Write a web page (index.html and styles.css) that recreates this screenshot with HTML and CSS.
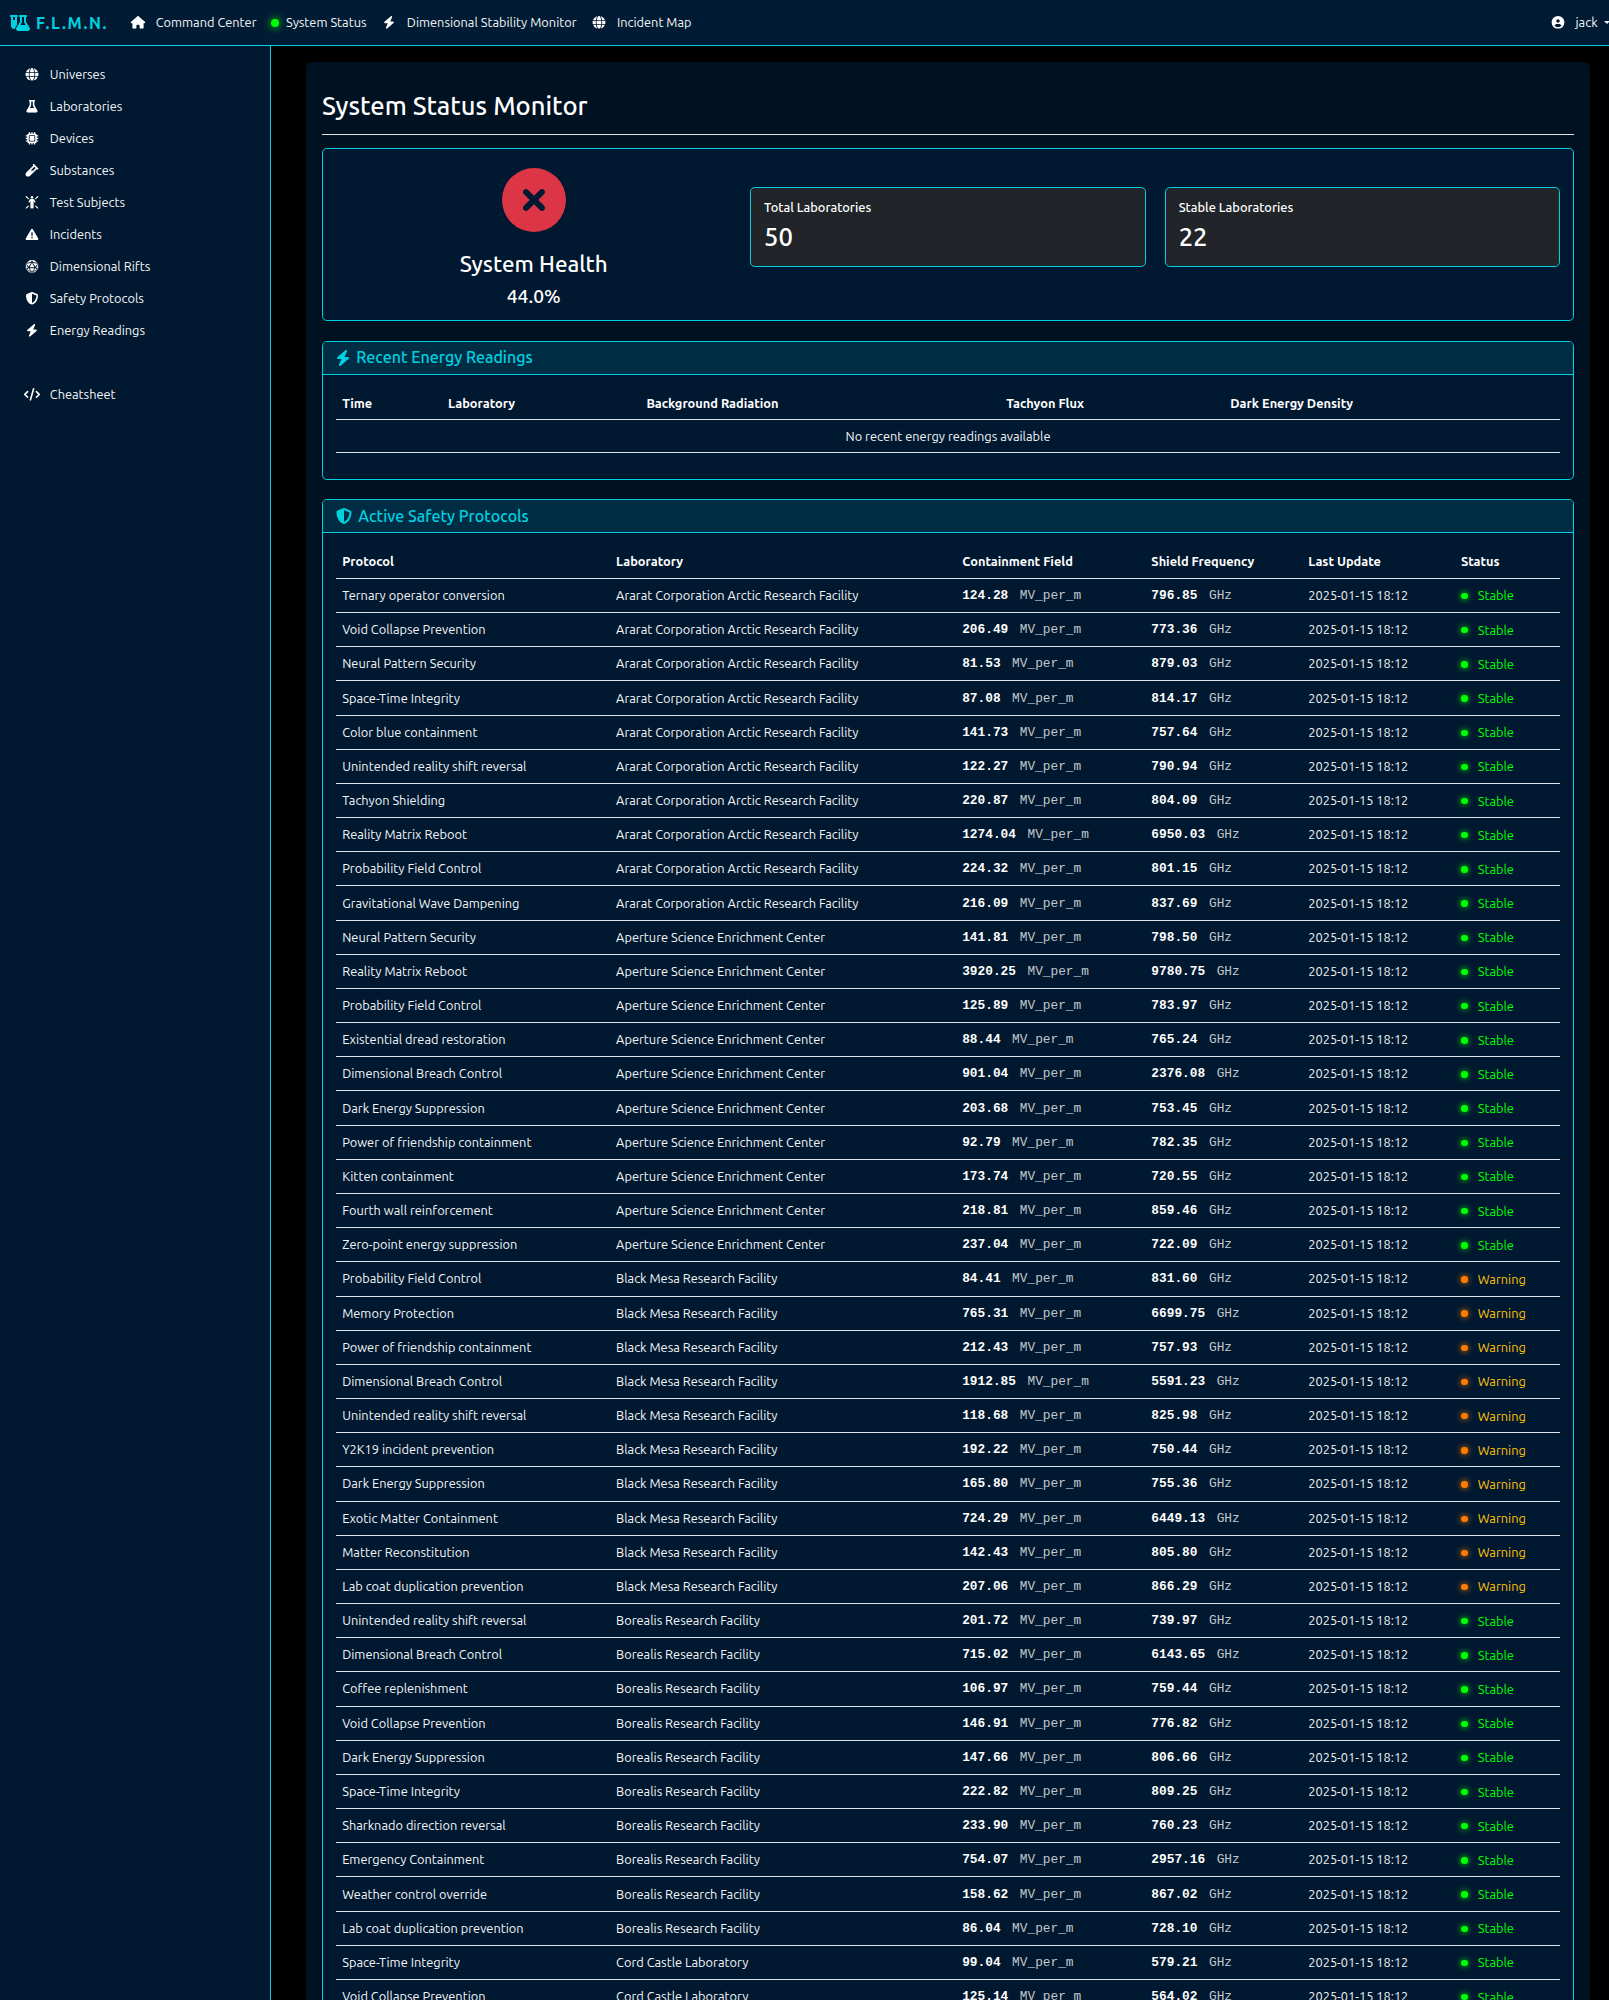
FILE: index.html
```
<!DOCTYPE html>
<html lang="en">
<head>
<meta charset="utf-8">
<title>System Status Monitor</title>
<link rel="stylesheet" href="styles.css">
</head>
<body>
<svg class="sprite" aria-hidden="true">
  <symbol id="bolt" viewBox="0 0 448 512"><path d="M349.4 44.6c5.9-13.7 1.5-29.7-10.6-38.5s-28.6-8-39.9 1.8l-256 224c-10 8.8-13.6 22.9-8.9 35.3S50.7 288 64 288H175.5L98.6 467.4c-5.9 13.7-1.5 29.7 10.6 38.5s28.6 8 39.9-1.8l256-224c10-8.8 13.6-22.9 8.9-35.3s-16.6-20.7-30-20.7H272.5L349.4 44.6z"/></symbol>
  <symbol id="house" viewBox="0 0 576 512"><path d="M575.8 255.5c0 18-15 32.1-32 32.1h-32l.7 160.2c0 2.7-.2 5.4-.5 8.1V472c0 22.1-17.9 40-40 40H456c-1.1 0-2.2 0-3.3-.1c-1.4 .1-2.8 .1-4.2 .1H416 392c-22.1 0-40-17.9-40-40V448 384c0-17.7-14.3-32-32-32H256c-17.7 0-32 14.3-32 32v64 24c0 22.1-17.9 40-40 40H160 128.1c-1.5 0-3-.1-4.5-.2c-1.2 .1-2.4 .2-3.6 .2H104c-22.1 0-40-17.9-40-40V360c0-.9 0-1.9 .1-2.8V287.6H32c-18 0-32-14-32-32.1c0-9 3-17 10-24L266.4 8c7-7 15-8 22-8s15 2 21 7L564.8 231.5c8 7 12 15 11 24z"/></symbol>
  <symbol id="globe" viewBox="0 0 512 512"><path d="M352 256c0 22.2-1.2 43.6-3.3 64H163.3c-2.2-20.4-3.3-41.8-3.3-64s1.2-43.6 3.3-64H348.7c2.2 20.4 3.3 41.8 3.3 64zm28.8-64H503.9c5.3 20.5 8.1 41.9 8.1 64s-2.8 43.5-8.1 64H380.8c2.1-20.6 3.2-42 3.2-64s-1.1-43.4-3.2-64zm112.6-32H376.7c-10-63.9-29.8-117.4-55.3-151.6c78.3 20.7 142 77.5 171.9 151.6zm-149.1 0H167.7c6.1-36.4 15.5-68.6 27-94.7c10.5-23.6 22.2-40.7 33.5-51.5C239.4 3.2 248.7 0 256 0s16.6 3.2 27.8 13.8c11.3 10.8 23 27.9 33.5 51.5c11.6 26 20.9 58.2 27 94.7zm-209 0H18.6C48.6 85.9 112.2 29.1 190.6 8.4C165.1 42.6 145.3 96.1 135.3 160zM8.1 192H131.2c-2.1 20.6-3.2 42-3.2 64s1.1 43.4 3.2 64H8.1C2.8 299.5 0 278.1 0 256s2.8-43.5 8.1-64zM194.7 446.6c-11.6-26-20.9-58.2-27-94.6H344.3c-6.1 36.4-15.5 68.6-27 94.6c-10.5 23.6-22.2 40.7-33.5 51.5C272.6 508.8 263.3 512 256 512s-16.6-3.2-27.8-13.8c-11.3-10.8-23-27.9-33.5-51.5zM135.3 352c10 63.9 29.8 117.4 55.3 151.6C112.2 482.9 48.6 426.1 18.6 352H135.3zm358.1 0c-30 74.1-93.6 130.9-171.9 151.6c25.5-34.2 45.2-87.7 55.3-151.6H493.4z"/></symbol>
  <symbol id="flask" viewBox="0 0 448 512"><path d="M288 0H128C110.3 0 96 14.3 96 32s14.3 32 32 32V196.8c0 11.8-3.3 23.5-9.5 33.5L10.3 406.2C3.6 417.2 0 429.7 0 442.6C0 480.9 31.1 512 69.4 512H378.6c38.3 0 69.4-31.1 69.4-69.4c0-12.8-3.6-25.4-10.3-36.4L329.5 230.4c-6.2-10.1-9.5-21.7-9.5-33.5V64c17.7 0 32-14.3 32-32s-14.3-32-32-32H288zM192 196.8V64h64V196.8c0 23.7 6.6 46.9 19 67.1L309.5 320h-171L173 263.9c12.4-20.2 19-43.4 19-67.1z"/></symbol>
  <symbol id="chip" viewBox="0 0 512 512"><path d="M176 24c0-13.3-10.7-24-24-24s-24 10.7-24 24V64c-35.3 0-64 28.7-64 64H24c-13.3 0-24 10.7-24 24s10.7 24 24 24H64v56H24c-13.3 0-24 10.7-24 24s10.7 24 24 24H64v56H24c-13.3 0-24 10.7-24 24s10.7 24 24 24H64c0 35.3 28.7 64 64 64v40c0 13.3 10.7 24 24 24s24-10.7 24-24V448h56v40c0 13.3 10.7 24 24 24s24-10.7 24-24V448h56v40c0 13.3 10.7 24 24 24s24-10.7 24-24V448c35.3 0 64-28.7 64-64h40c13.3 0 24-10.7 24-24s-10.7-24-24-24H448V280h40c13.3 0 24-10.7 24-24s-10.7-24-24-24H448V176h40c13.3 0 24-10.7 24-24s-10.7-24-24-24H448c0-35.3-28.7-64-64-64V24c0-13.3-10.7-24-24-24s-24 10.7-24 24V64H280V24c0-13.3-10.7-24-24-24s-24 10.7-24 24V64H176V24zM160 128H352c17.7 0 32 14.3 32 32V352c0 17.7-14.3 32-32 32H160c-17.7 0-32-14.3-32-32V160c0-17.7 14.3-32 32-32zm192 32H160V352H352V160z"/></symbol>
  <symbol id="vial" viewBox="0 0 512 512"><path d="M342.6 9.4c-12.5-12.5-32.8-12.5-45.3 0s-12.5 32.8 0 45.3l9.4 9.4L28.1 342.6C10.1 360.6 0 385 0 410.5V416c0 53 43 96 96 96h5.5c25.5 0 49.9-10.1 67.9-28.1L448 205.3l9.4 9.4c12.5 12.5 32.8 12.5 45.3 0s12.5-32.8 0-45.3l-32-32-96-96-32-32zM205.3 256L352 109.3 402.7 160l-96 96H205.3z"/></symbol>
  <symbol id="rays" viewBox="0 0 512 512"><circle cx="256" cy="48" r="48"/><path d="M220 112h72c24 0 42 10 54 32l46 84c7 13 3 28-10 35s-28 3-35-10l-27-48V480c0 18-14 32-32 32s-30-14-30-32V352h-4v128c0 18-12 32-30 32s-32-14-32-32V205l-27 48c-7 13-22 17-35 10s-17-22-10-35l46-84c12-22 30-32 54-32z"/><path d="M24 24l84 84M488 24l-84 84M24 488l84-84M488 488l-84-84" fill="none" stroke="currentColor" stroke-width="48" stroke-linecap="round"/></symbol>
  <symbol id="alert" viewBox="0 0 512 512"><path d="M256 32c14.2 0 27.3 7.5 34.5 19.8l216 368c7.3 12.4 7.3 27.7 .2 40.1S486.3 480 472 480H40c-14.3 0-27.6-7.7-34.7-20.1s-7-27.8 .2-40.1l216-368C228.7 39.5 241.8 32 256 32zm0 128c-13.3 0-24 10.7-24 24V296c0 13.3 10.7 24 24 24s24-10.7 24-24V184c0-13.3-10.7-24-24-24zm32 224a32 32 0 1 0 -64 0 32 32 0 1 0 64 0z"/></symbol>
  <symbol id="sphere" viewBox="0 0 512 512"><path d="M256 112L352 288H160zM228 98L122 270 42 160zM284 98L390 270 470 160zM26 200L100 300 26 330zM486 200L412 300 486 330zM150 328H362L256 470zM60 368L118 332 206 464zM452 368L394 332 306 464zM130 26L230 8V68L84 112zM382 26L282 8V68L428 112zM90 424L206 500 140 488zM422 424L306 500 372 488z"/><circle cx="256" cy="256" r="240" fill="none" stroke="currentColor" stroke-width="26"/></symbol>
  <symbol id="shield" viewBox="0 0 512 512"><path d="M256 0c4.6 0 9.2 1 13.4 2.9L457.7 82.8c22 9.3 38.4 31 38.3 57.2c-.5 99.2-41.3 280.7-213.6 363.2c-16.7 8-36.1 8-52.8 0C57.3 420.7 16.5 239.2 16 140c-.1-26.2 16.3-47.9 38.3-57.2L242.7 2.9C246.8 1 251.4 0 256 0zm0 66.8V444.8C394 378 431.1 230.1 432 141.4L256 66.8z"/></symbol>
  <symbol id="code" viewBox="0 0 640 512"><path d="M392.8 1.2c-17-4.9-34.7 5-39.6 22l-128 448c-4.9 17 5 34.7 22 39.6s34.7-5 39.6-22l128-448c4.9-17-5-34.7-22-39.6zm80.6 120.1c-12.5 12.5-12.5 32.8 0 45.3L562.7 256l-89.4 89.4c-12.5 12.5-12.5 32.8 0 45.3s32.8 12.5 45.3 0l112-112c12.5-12.5 12.5-32.8 0-45.3l-112-112c-12.5-12.5-32.8-12.5-45.3 0zm-306.7 0c-12.5-12.5-32.8-12.5-45.3 0l-112 112c-12.5 12.5-12.5 32.8 0 45.3l112 112c12.5 12.5 32.8 12.5 45.3 0s12.5-32.8 0-45.3L77.3 256l89.4-89.4c12.5-12.5 12.5-32.8 0-45.3z"/></symbol>
  <symbol id="user" viewBox="0 0 512 512"><path d="M399 384.2C376.9 345.8 335.4 320 288 320H224c-47.4 0-88.9 25.8-111 64.2c35.2 39.2 86.2 63.8 143 63.8s107.8-24.7 143-63.8zM0 256a256 256 0 1 1 512 0A256 256 0 1 1 0 256zm256 16a72 72 0 1 0 0-144 72 72 0 1 0 0 144z"/></symbol>
  <symbol id="xmark" viewBox="0 0 512 512"><path d="M256 512A256 256 0 1 0 256 0a256 256 0 1 0 0 512zM175 175c9.4-9.4 24.6-9.4 33.9 0l47 47 47-47c9.4-9.4 24.6-9.4 33.9 0s9.4 24.6 0 33.9l-47 47 47 47c9.4 9.4 9.4 24.6 0 33.9s-24.6 9.4-33.9 0l-47-47-47 47c-9.4 9.4-24.6 9.4-33.9 0s-9.4-24.6 0-33.9l47-47-47-47c-9.4-9.4-9.4-24.6 0-33.9z"/></symbol>
  <symbol id="logo" viewBox="0 0 640 512"><path d="M175 389.4c-9.8 16-15 34.3-15 53.1c-10 3.5-20.8 5.5-32 5.5c-53 0-96-43-96-96V64C14.3 64 0 49.7 0 32S14.3 0 32 0H96h64 64c17.7 0 32 14.3 32 32s-14.3 32-32 32V309.9l-49 79.6zM96 64v96h64V64H96zM352 0H480h32c17.7 0 32 14.3 32 32s-14.3 32-32 32V214.9L629.7 406.2c6.7 10.9 10.3 23.5 10.3 36.4c0 38.3-31.1 69.4-69.4 69.4H261.4c-38.3 0-69.4-31.1-69.4-69.4c0-12.8 3.6-25.4 10.3-36.4L320 214.9V64c-17.7 0-32-14.3-32-32s14.3-32 32-32h32zm32 64V224c0 5.9-1.6 11.7-4.7 16.8L330.5 320h171l-48.8-79.2c-3.1-5-4.7-10.8-4.7-16.8V64H384z"/></symbol>
</svg>

<header class="navbar">
  <a class="brand"><svg class="brand-icon"><use href="#logo"/></svg>F.L.M.N.</a>
  <nav class="nav-links">
    <a class="link"><svg class="icon"><use href="#house"/></svg>Command Center</a>
    <a class="link link-status"><i class="nav-dot"></i>System Status</a>
    <a class="link"><svg class="icon"><use href="#bolt"/></svg>Dimensional Stability Monitor</a>
    <a class="link"><svg class="icon"><use href="#globe"/></svg>Incident Map</a>
  </nav>
  <a class="link user"><svg class="icon"><use href="#user"/></svg>jack<i class="caret"></i></a>
</header>

<div class="shell">
  <aside class="sidebar">
    <a class="link"><svg class="icon"><use href="#globe"/></svg>Universes</a>
    <a class="link"><svg class="icon"><use href="#flask"/></svg>Laboratories</a>
    <a class="link"><svg class="icon"><use href="#chip"/></svg>Devices</a>
    <a class="link"><svg class="icon"><use href="#vial"/></svg>Substances</a>
    <a class="link"><svg class="icon"><use href="#rays"/></svg>Test Subjects</a>
    <a class="link"><svg class="icon"><use href="#alert"/></svg>Incidents</a>
    <a class="link"><svg class="icon"><use href="#sphere"/></svg>Dimensional Rifts</a>
    <a class="link"><svg class="icon"><use href="#shield"/></svg>Safety Protocols</a>
    <a class="link"><svg class="icon"><use href="#bolt"/></svg>Energy Readings</a>
    <a class="link link-extra"><svg class="icon"><use href="#code"/></svg>Cheatsheet</a>
  </aside>

  <main class="panel">
    <h2 class="page-title">System Status Monitor</h2>

    <section class="card overview">
      <div class="health">
        <svg class="health-icon"><use href="#xmark"/></svg>
        <h3 class="health-title">System Health</h3>
        <div class="health-value">44.0%</div>
      </div>
      <div class="stats">
        <div class="stat"><h6 class="stat-label">Total Laboratories</h6><div class="stat-value">50</div></div>
        <div class="stat"><h6 class="stat-label">Stable Laboratories</h6><div class="stat-value">22</div></div>
      </div>
    </section>

    <section class="card">
      <h5 class="card-header"><svg class="card-icon narrow"><use href="#bolt"/></svg>Recent Energy Readings</h5>
      <div class="card-body">
        <table class="table">
          <colgroup><col class="r1"><col class="r2"><col class="r3"><col class="r4"><col></colgroup>
          <thead><tr><th>Time</th><th>Laboratory</th><th>Background Radiation</th><th>Tachyon Flux</th><th>Dark Energy Density</th></tr></thead>
          <tbody><tr><td colspan="5" class="empty">No recent energy readings available</td></tr></tbody>
        </table>
      </div>
    </section>

    <section class="card">
      <h5 class="card-header"><svg class="card-icon"><use href="#shield"/></svg>Active Safety Protocols</h5>
      <div class="card-body">
        <table class="table protocols">
          <colgroup><col class="p1"><col class="p2"><col class="p3"><col class="p4"><col class="p5"><col></colgroup>
          <thead><tr><th>Protocol</th><th>Laboratory</th><th>Containment Field</th><th>Shield Frequency</th><th>Last Update</th><th>Status</th></tr></thead>
          <tbody id="protocol-rows"></tbody>
        </table>
      </div>
    </section>
  </main>
</div>
<script src="app.js"></script>
</body>
</html>
```
FILE: styles.css
```
:root {
  --cyan: #00d1e0;
  --navy: #001830;
  --line: #dee2e6;
  font-size: 12.8px;
}
* { box-sizing: border-box; }
body {
  margin: 0;
  height: 2000px;
  overflow: hidden;
  display: flex;
  flex-direction: column;
  background: #000;
  color: #f4f6f8;
  font: 12.8px/1.5 Ubuntu, "Noto Sans", sans-serif;
}
h2, h3, h5, h6 { margin: 0; font-weight: 500; line-height: 1.2; color: #fff; }
svg { fill: currentColor; flex: none; }
.sprite { position: absolute; width: 0; height: 0; }

.navbar {
  flex: none;
  display: flex;
  align-items: center;
  height: 46px;
  padding-left: 9.5px;
  background: #001b33;
  border-bottom: 1px solid var(--cyan);
}
.brand {
  display: flex;
  align-items: center;
  gap: 6.4px;
  width: 120.8px;
  color: var(--cyan);
  font-size: 16px;
  font-weight: 700;
  letter-spacing: 1.6px;
}
.brand-icon { width: 20px; height: 16px; }
.nav-links { display: flex; gap: 14.9px; }
.link { display: flex; align-items: center; gap: 9.4px; white-space: nowrap; }
.icon { width: 16px; height: 12.8px; color: #fff; }
.link-status { gap: 6.7px; }
.nav-dot {
  width: 8px;
  height: 8px;
  border-radius: 50%;
  background: #0f0;
  box-shadow: 0 0 8px #0f0;
}
.user { margin-left: auto; margin-right: -1px; }
.caret {
  margin-left: -3px;
  border: 3.84px solid transparent;
  border-top-color: #f4f6f8;
  border-bottom: 0;
}

.shell { flex: 1; display: flex; min-height: 0; }
.sidebar {
  flex: none;
  width: 271px;
  padding: 12.4px 0 0 24.4px;
  background: var(--navy);
  border-right: 1px solid var(--cyan);
}
.sidebar .link { height: 32px; }
.sidebar .link-extra { margin-top: 32px; }

.panel {
  flex: none;
  width: 1284px;
  height: 2200px;
  margin: 16px 0 0 35px;
  padding: 28.8px 16px 0;
  background: #001122;
  border-radius: 6px;
}
.page-title {
  font-size: 25.6px;
  padding-bottom: 12.8px;
  margin-bottom: 12.8px;
  border-bottom: 1px solid var(--line);
}

.card {
  margin-bottom: 19.2px;
  background: var(--navy);
  border: 1px solid var(--cyan);
  border-radius: 4.8px;
}
.overview { display: flex; height: 173.4px; padding: 0 12.8px; }
.health {
  width: 395.8px;
  margin-right: 18.7px;
  display: flex;
  flex-direction: column;
  align-items: center;
  padding-top: 18.9px;
}
.health-icon { width: 64px; height: 64px; color: #dc3545; }
.health-title { margin: 19.2px 0 7px; font-size: 22.4px; }
.health-value { font-size: 19.2px; line-height: 1.2; font-weight: 500; color: #fff; }
.stats { flex: 1; display: flex; align-items: flex-start; gap: 19.2px; padding-top: 38px; }
.stat {
  flex: 1;
  padding: 12px 12.8px 13.6px;
  background: #212529;
  border: 1px solid var(--cyan);
  border-radius: 4.8px;
}
.stat-label { margin-bottom: 6.2px; font-size: 12.8px; }
.stat-value { font-size: 25.6px; font-weight: 500; line-height: 1.2; color: #fff; }

.card-header {
  display: flex;
  align-items: center;
  gap: 6.5px;
  padding: 6.4px 12.8px;
  font-size: 16px;
  color: var(--cyan);
  background: #002d44;
  border-bottom: 1px solid var(--cyan);
  border-radius: 3.8px 3.8px 0 0;
}
.card-icon { width: 16px; height: 16px; }
.card-icon.narrow { width: 14px; }
.card-body { padding: 12.8px; }

.table {
  width: 100%;
  margin-bottom: 12.8px;
  table-layout: fixed;
  border-collapse: separate;
  border-spacing: 0;
}
.table th, .table td {
  padding: 6.4px;
  text-align: left;
  vertical-align: top;
  white-space: nowrap;
  border-bottom: 1px solid var(--line);
}
.table th { color: #fff; font-weight: 700; }
.table .empty { text-align: center; }
.r1 { width: 105.9px; }
.r2 { width: 198.3px; }
.r3 { width: 359.8px; }
.r4 { width: 224.1px; }
.p1 { width: 273.9px; }
.p2 { width: 346.1px; }
.p3 { width: 189.2px; }
.p4 { width: 156.9px; }
.p5 { width: 152.7px; }
.protocols td { height: 34.18px; padding-top: 7.1px; padding-bottom: 5px; }

.reading { display: block; font-family: "Liberation Mono", monospace; line-height: 19.2px; white-space: pre; }
.reading b { color: #fff; }
.unit { margin-left: 3.84px; color: #c4c8cc; }
.status { display: flex; align-items: center; gap: 10px; padding: .5px 0 0 .4px; }
.status::before {
  content: "";
  width: 6.4px;
  height: 6.4px;
  border-radius: 50%;
}
.stable { color: #0f0; }
.stable::before { background: #0f0; box-shadow: 0 0 6.4px #0f0; }
.warning { color: #ffc107; }
.warning::before { background: #ff7b00; box-shadow: 0 0 6.4px #ff7b00; }
```
FILE: app.js
```
const labs = [
  ["Ararat Corporation Arctic Research Facility", "Stable", [
    ["Ternary operator conversion", "124.28", "796.85"],
    ["Void Collapse Prevention", "206.49", "773.36"],
    ["Neural Pattern Security", "81.53", "879.03"],
    ["Space-Time Integrity", "87.08", "814.17"],
    ["Color blue containment", "141.73", "757.64"],
    ["Unintended reality shift reversal", "122.27", "790.94"],
    ["Tachyon Shielding", "220.87", "804.09"],
    ["Reality Matrix Reboot", "1274.04", "6950.03"],
    ["Probability Field Control", "224.32", "801.15"],
    ["Gravitational Wave Dampening", "216.09", "837.69"],
  ]],
  ["Aperture Science Enrichment Center", "Stable", [
    ["Neural Pattern Security", "141.81", "798.50"],
    ["Reality Matrix Reboot", "3920.25", "9780.75"],
    ["Probability Field Control", "125.89", "783.97"],
    ["Existential dread restoration", "88.44", "765.24"],
    ["Dimensional Breach Control", "901.04", "2376.08"],
    ["Dark Energy Suppression", "203.68", "753.45"],
    ["Power of friendship containment", "92.79", "782.35"],
    ["Kitten containment", "173.74", "720.55"],
    ["Fourth wall reinforcement", "218.81", "859.46"],
    ["Zero-point energy suppression", "237.04", "722.09"],
  ]],
  ["Black Mesa Research Facility", "Warning", [
    ["Probability Field Control", "84.41", "831.60"],
    ["Memory Protection", "765.31", "6699.75"],
    ["Power of friendship containment", "212.43", "757.93"],
    ["Dimensional Breach Control", "1912.85", "5591.23"],
    ["Unintended reality shift reversal", "118.68", "825.98"],
    ["Y2K19 incident prevention", "192.22", "750.44"],
    ["Dark Energy Suppression", "165.80", "755.36"],
    ["Exotic Matter Containment", "724.29", "6449.13"],
    ["Matter Reconstitution", "142.43", "805.80"],
    ["Lab coat duplication prevention", "207.06", "866.29"],
  ]],
  ["Borealis Research Facility", "Stable", [
    ["Unintended reality shift reversal", "201.72", "739.97"],
    ["Dimensional Breach Control", "715.02", "6143.65"],
    ["Coffee replenishment", "106.97", "759.44"],
    ["Void Collapse Prevention", "146.91", "776.82"],
    ["Dark Energy Suppression", "147.66", "806.66"],
    ["Space-Time Integrity", "222.82", "809.25"],
    ["Sharknado direction reversal", "233.90", "760.23"],
    ["Emergency Containment", "754.07", "2957.16"],
    ["Weather control override", "158.62", "867.02"],
    ["Lab coat duplication prevention", "86.04", "728.10"],
  ]],
  ["Cord Castle Laboratory", "Stable", [
    ["Space-Time Integrity", "99.04", "579.21"],
    ["Void Collapse Prevention", "125.14", "564.02"],
  ]],
];

const reading = (value, unit) =>
  `<span class="reading"><b>${value}</b> <span class="unit">${unit}</span></span>`;

document.getElementById("protocol-rows").innerHTML = labs
  .flatMap(([lab, status, protocols]) => protocols.map(([name, field, frequency]) => `<tr>
    <td>${name}</td><td>${lab}</td>
    <td>${reading(field, "MV_per_m")}</td><td>${reading(frequency, "GHz")}</td>
    <td>2025-01-15 18:12</td>
    <td><span class="status ${status.toLowerCase()}">${status}</span></td>
  </tr>`))
  .join("");
```
